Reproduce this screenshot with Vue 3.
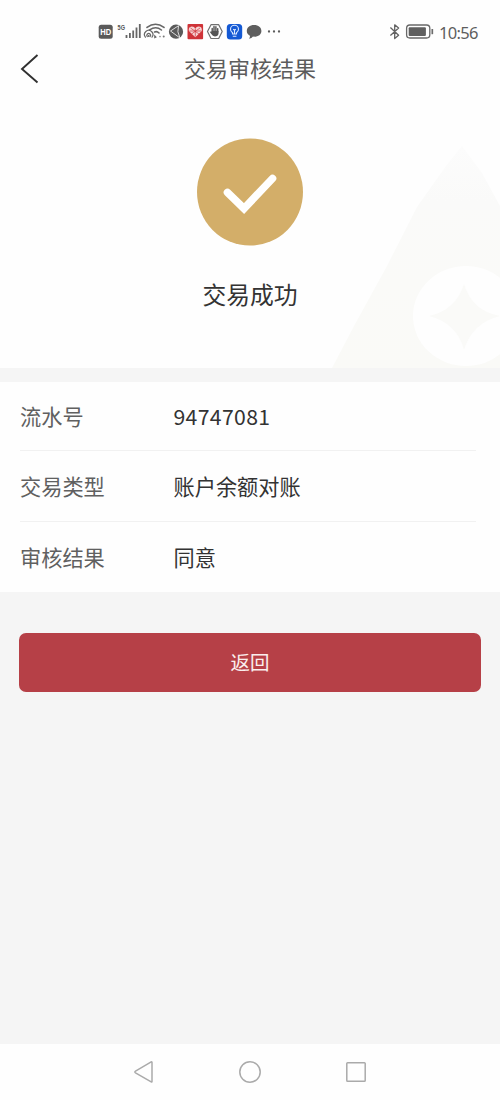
<script setup>
const rows = [
  { label: '流水号', value: '94747081', numeric: true },
  { label: '交易类型', value: '账户余额对账' },
  { label: '审核结果', value: '同意' },
]
</script>

<template>
  <div class="screen">
    <div class="status">
      <svg class="icons" width="184" height="20" viewBox="98 22 184 20">
        <rect x="98.700" y="24.800" width="14" height="14" rx="2.500" fill="#5a5a5a" />
        <text x="100.300" y="35.200" class="hd" textLength="11" lengthAdjust="spacingAndGlyphs">HD</text>
        <text x="117.600" y="30.400" class="fiveg" textLength="7.400" lengthAdjust="spacingAndGlyphs">5G</text>
        <path d="M126.500 38v-3M129.900 38v-5M133.200 38v-7.600M136.500 38v-10.500M139.800 38v-14" stroke="#666" stroke-width="1.800" fill="none" />
        <g fill="none" stroke="#666" stroke-width="1.600" stroke-linecap="round">
          <path d="M147 27.400Q155.500 21 164 27.400M149.600 29.800Q156 25.600 161.400 30M154.600 32Q157 31 159 33" />
          <path d="M145.400 37.200a4.200 4.200 0 1 1 6.600 0M147.300 36.600a1.900 1.900 0 1 1 2.800 0" stroke-width="1.200" />
        </g>
        <circle cx="148.700" cy="36" r="1" fill="#666" />
        <path d="M154.200 34.600l2.700 2.700-2.700 1.200z" fill="#666" />
        <circle cx="160" cy="36.600" r=".8" fill="#888" /><circle cx="163.700" cy="36.600" r="1" fill="#777" />
        <circle cx="176" cy="31.700" r="7.100" fill="#5a5a5a" />
        <path d="M170.500 31l8-5.300M170.500 31l9.500 7M178.500 25.700q-2 6 1.500 12.300" fill="none" stroke="#ddd" stroke-width="1" />
        <rect x="187.500" y="24" width="15.600" height="15.200" rx="1" fill="#cf3338" />
        <path d="M195.300 37.200l-6.400-6.200q-.8-4 2.800-4.400 2.500-.1 3.600 2 1.300-2.200 3.700-2 3.500.5 2.700 4.400z" fill="#f6d4d4" />
        <path d="M190.500 28l8.500 6M200 28l-8.500 6M195.300 28.500v8M189.500 31h11.500" stroke="#cf3338" stroke-width=".7" />
        <path d="M211 24.700h7.700l3.500 6.900-3.500 6.900H211l-3.500-6.900z" fill="#fff" stroke="#707070" stroke-width="1.200" stroke-linejoin="round" />
        <path d="M212.200 32v-3.600M214 31.500v-5M215.900 31.500v-4.700M217.700 32v-3.400" stroke="#555" stroke-width="1.450" stroke-linecap="round" />
        <path d="M211.500 31h7v2.800q-.6 2.600-3.600 2.600-2.200 0-3.600-2.400l-1.600-2.200q.6-.8 1.800.3z" fill="#555" />
        <rect x="226.800" y="24" width="15.400" height="15.400" rx="3.500" fill="#1459d4" />
        <path d="M232.500 34v-1.300q-2-1.500-2-3.500a4 4 0 0 1 8 0q0 2-2 3.500V34zM232.800 36.300h3.600M234.500 33.500v-3.200l-1.300-1.200M234.500 30.300l1.300-1.200" fill="none" stroke="#dbe9ff" stroke-width="1.100" />
        <path d="M254.100 25c4.400 0 7.300 2.500 7.300 5.900s-2.900 5.800-7.300 5.800l-1.100-.1q-1.200 1.900-4 2.100 1.200-1.300.9-3-3.100-1.700-3.100-4.800c0-3.400 2.900-5.900 7.300-5.900z" fill="#5e5e5e" />
        <g fill="#5c5c5c"><circle cx="269" cy="31.500" r="1.150" /><circle cx="274" cy="31.500" r="1.150" /><circle cx="279" cy="31.500" r="1.150" /></g>
      </svg>
      <div class="right">
        <svg width="46" height="20" viewBox="388 22 46 20">
          <path d="M390.400 27.500l8.200 7.800-3.900 3.200V24.800l3.900 3.200-8.200 7.500" fill="none" stroke="#626262" stroke-width="1.300" stroke-linejoin="round" />
          <rect x="406.600" y="25" width="23.200" height="13" rx="3.200" fill="none" stroke="#686868" stroke-width="1.300" />
          <rect x="408.700" y="27.200" width="17.200" height="8.700" rx="1" fill="#5f5f5f" />
          <path d="M432.300 29v5.200" stroke="#6c6c6c" stroke-width="1.700" />
        </svg>
        <span class="time">10:56</span>
      </div>
    </div>
    <header class="bar">
      <svg class="back" width="20" height="30" viewBox="0 0 20 30"><path d="M17.500 1L2 15l15.500 13.500" fill="none" stroke="#303030" stroke-width="1.900" /></svg>
      <h1>交易审核结果</h1>
    </header>
    <section class="result">
      <svg class="mark" width="170" height="222" viewBox="0 0 170 222" aria-hidden="true">
        <defs><linearGradient id="fade" x1="0" y1="0" x2="0" y2="1"><stop offset="0" stop-color="#fcfcfc" /><stop offset=".25" stop-color="#fafaf9" /><stop offset="1" stop-color="#fafaf7" /></linearGradient></defs>
        <path d="M2 222L24 180 57 120 87 61 116 20 132 0 152 27 170 60V222z" fill="url(#fade)" />
        <ellipse cx="136" cy="170" rx="53" ry="50" fill="#fefefe" />
        <path d="M134 138q8 27 36 32-28 7-36 34-7-27-35-34 27-6 35-32z" fill="#fafaf8" />
      </svg>
      <svg class="check" width="106" height="108" viewBox="0 0 106 108">
        <ellipse cx="53" cy="54" rx="53" ry="53.600" fill="#d3ae69" />
        <path d="M30.500 54.500L47 70.500 75.500 40.500" fill="none" stroke="#fff" stroke-width="7.600" stroke-linecap="round" stroke-linejoin="miter" />
      </svg>
      <p>交易成功</p>
    </section>
    <dl class="details">
      <div v-for="row in rows" :key="row.label" class="row">
        <dt>{{ row.label }}</dt>
        <dd :class="{ numeric: row.numeric }">{{ row.value }}</dd>
      </div>
    </dl>
    <button class="return">返回</button>
    <nav class="nav">
      <svg width="20" height="24" viewBox="0 0 20 24"><path d="M18 2.300v19.200q0 .8-.8.300L1.500 12.800q-1.300-.8 0-1.600l15.700-9.300q.8-.4.800.4z" /></svg>
      <svg width="24" height="24" viewBox="0 0 24 24"><circle cx="12" cy="12" r="10.200" /></svg>
      <svg width="20" height="24" viewBox="0 0 20 24"><rect x=".8" y="2.800" width="18.400" height="18.400" rx=".8" /></svg>
    </nav>
  </div>
</template>

<style>
body { margin: 0; }
</style>

<style scoped>
.screen {
  width: 500px;
  height: 1100px;
  display: flex;
  flex-direction: column;
  background: #f5f5f5;
  overflow: hidden;
  font-family: "Noto Sans CJK SC", sans-serif;
}
.status {
  height: 42px;
  flex: none;
  box-sizing: border-box;
  padding: 22px 21px 0 98px;
  display: flex;
  justify-content: space-between;
  background: #fefefe;
}
.icons { display: block; }
.hd { font: bold 8.5px "Liberation Sans", sans-serif; fill: #fff; }
.fiveg { font: bold 7px "Liberation Sans", sans-serif; fill: #555; }
.right { display: flex; gap: 5px; }
.time { font: 16.5px/21px "Noto Sans", sans-serif; color: #5e5e5e; width: 40px; letter-spacing: -0.7px; white-space: nowrap; }
.bar {
  height: 53px;
  flex: none;
  display: grid;
  grid-template-columns: 60px 1fr 60px;
  align-items: center;
  background: #fefefe;
}
.back { margin-left: 20px; }
h1 { margin: 0 0 4px; text-align: center; font-size: 22px; font-weight: 400; line-height: 32px; color: #5c5c5c; }
.result {
  height: 273px;
  flex: none;
  position: relative;
  display: flex;
  flex-direction: column;
  align-items: center;
  background: #fefefe;
}
.mark { position: absolute; right: 0; bottom: 0; }
.check { position: relative; margin-top: 43px; }
.result p { position: relative; margin: 30px 0 0; font-size: 23.8px; line-height: 36px; color: #333; }
.details { margin: 14px 0 0; flex: none; background: #fefefe; }
.row {
  height: 70px;
  margin: 0 24px 0 20px;
  display: grid;
  grid-template-columns: 153.5px 1fr;
  align-items: center;
  border-bottom: 1px solid #f1f1f1;
  font-size: 21.2px;
  line-height: 32px;
}
.row:first-child { height: 68px; }
.row:last-child { border-bottom: 0; }
dt { color: #606060; }
dd { margin: 0; color: #333; }
.numeric { letter-spacing: 0.35px; }
.return {
  flex: none;
  height: 59px;
  margin: 41px 19px 0;
  padding: 0 0 3px;
  border: 0;
  border-radius: 7px;
  background: #b64047;
  color: #fbeeee;
  font-family: inherit;
  font-size: 19.5px;
}
.nav {
  margin-top: auto;
  height: 56px;
  flex: none;
  display: flex;
  justify-content: center;
  align-items: center;
  gap: 84px;
  background: #fefefe;
}
.nav svg { fill: none; stroke: #aaa; stroke-width: 1.5; }
</style>
